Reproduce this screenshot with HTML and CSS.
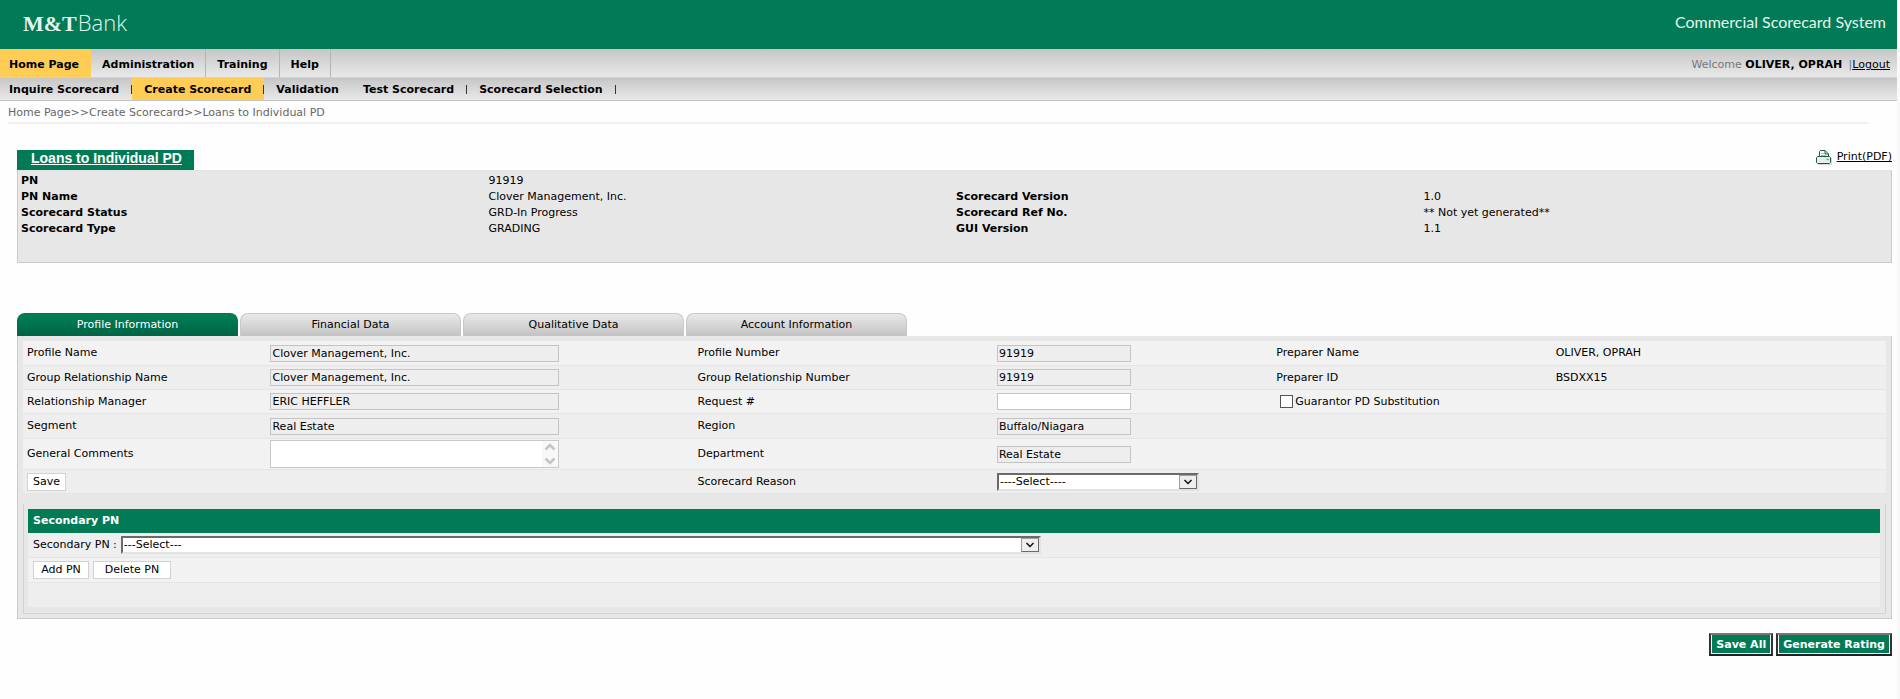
FILE: index.html
```html
<!DOCTYPE html>
<html lang="en">
<head>
<meta charset="utf-8">
<title>Commercial Scorecard System</title>
<link rel="stylesheet" href="styles.css">
</head>
<body>
<div class="page">
  <header class="banner">
    <div class="logo"><span class="logo-mark">M&amp;T</span><span class="logo-name">Bank</span></div>
    <div class="system-name">Commercial Scorecard System</div>
  </header>
  <nav class="main-nav">
    <a class="active" href="#">Home Page</a>
    <a href="#">Administration</a>
    <a href="#">Training</a>
    <a href="#">Help</a>
    <div class="user">Welcome <b>OLIVER, OPRAH</b> <span class="sep">|</span><a class="logout" href="#">Logout</a></div>
  </nav>
  <nav class="sub-nav">
    <a href="#">Inquire Scorecard</a>
    <a class="active" href="#">Create Scorecard</a>
    <a class="plain" href="#">Validation</a>
    <a href="#">Test Scorecard</a>
    <a href="#">Scorecard Selection</a>
  </nav>
  <div class="breadcrumb">Home Page&gt;&gt;Create Scorecard&gt;&gt;Loans to Individual PD</div>

  <main class="content">
    <div class="title-row">
      <h1 class="title"><a href="#">Loans to Individual PD</a></h1>
      <a class="print" href="#">
        <svg class="print-icon" width="16" height="16" viewBox="0 0 16 16" aria-hidden="true">
          <path d="M2 14.500h13.500V8" fill="none" stroke="#d5d5d5"/>
          <path d="M3.500 6.500V1.500l1-1H9L12.500 4v2.500" fill="#fff" stroke="#1a5c48"/>
          <path d="M9 .500V4h3.500" fill="none" stroke="#1a5c48"/>
          <path d="M5 3.500h3M5 5.500h5" stroke="#b5b5b5"/>
          <path d="M1.500 6.500h12l1 1v5l-1 1h-12l-1-1v-5z" fill="#e9eeec" stroke="#1a5c48"/>
          <path d="M10.500 9.500h2.500" stroke="#2ee62e" stroke-width="1.500"/>
        </svg><span>Print(PDF)</span></a>
    </div>
    <section class="summary">
      <b>PN</b><span>91919</span><b></b><span></span>
      <b>PN Name</b><span>Clover Management, Inc.</span><b>Scorecard Version</b><span>1.0</span>
      <b>Scorecard Status</b><span>GRD-In Progress</span><b>Scorecard Ref No.</b><span>** Not yet generated**</span>
      <b>Scorecard Type</b><span>GRADING</span><b>GUI Version</b><span>1.1</span>
    </section>

    <div class="tabs">
      <button class="tab selected" type="button">Profile Information</button>
      <button class="tab" type="button">Financial Data</button>
      <button class="tab" type="button">Qualitative Data</button>
      <button class="tab" type="button">Account Information</button>
    </div>
    <form class="panel">
      <div class="row">
        <label for="pname">Profile Name</label><input id="pname" class="field" readonly value="Clover Management, Inc.">
        <label for="pnum">Profile Number</label><input id="pnum" class="field short" readonly value="91919">
        <span>Preparer Name</span><span>OLIVER, OPRAH</span>
      </div>
      <div class="row">
        <label for="gname">Group Relationship Name</label><input id="gname" class="field" readonly value="Clover Management, Inc.">
        <label for="gnum">Group Relationship Number</label><input id="gnum" class="field short" readonly value="91919">
        <span>Preparer ID</span><span>BSDXX15</span>
      </div>
      <div class="row">
        <label for="mgr">Relationship Manager</label><input id="mgr" class="field" readonly value="ERIC HEFFLER">
        <label for="req">Request #</label><input id="req" class="field short">
        <label class="check"><input type="checkbox">Guarantor PD Substitution</label>
      </div>
      <div class="row">
        <label for="seg">Segment</label><input id="seg" class="field" readonly value="Real Estate">
        <label for="reg">Region</label><input id="reg" class="field short" readonly value="Buffalo/Niagara">
      </div>
      <div class="row tall">
        <label for="comments">General Comments</label>
        <div class="comments">
          <textarea id="comments"></textarea>
          <svg class="scroller" width="16" height="26" viewBox="0 0 16 26" aria-hidden="true"><path d="M3.500 8.500L8 4l4.500 4.500M3.500 17.500L8 22l4.500-4.500" fill="none" stroke="#c4c4c4" stroke-width="2.500"/></svg>
        </div>
        <label for="dept">Department</label><input id="dept" class="field short" readonly value="Real Estate">
      </div>
      <div class="row">
        <button class="btn" type="button">Save</button><span></span>
        <label for="reason">Scorecard Reason</label>
        <div class="drop reason"><select id="reason"><option>----Select----</option></select><span class="arrow"><svg width="10" height="8" viewBox="0 0 10 8" aria-hidden="true"><path d="M1.500 2L5 5.500 8.500 2" fill="none" stroke="#111" stroke-width="1.500"/></svg></span></div>
      </div>

      <section class="secondary">
        <h2>Secondary PN</h2>
        <div class="line">
          <label for="spn">Secondary PN :</label>
          <div class="drop spn"><select id="spn"><option>---Select---</option></select><span class="arrow"><svg width="10" height="8" viewBox="0 0 10 8" aria-hidden="true"><path d="M1.500 2L5 5.500 8.500 2" fill="none" stroke="#111" stroke-width="1.500"/></svg></span></div>
        </div>
        <div class="line"><button class="btn add" type="button">Add PN</button><button class="btn delete" type="button">Delete PN</button></div>
        <div class="line"></div>
      </section>
    </form>
    <div class="actions">
      <button class="action" type="button">Save All</button>
      <button class="action" type="button">Generate Rating</button>
    </div>
  </main>
</div>
</body>
</html>
```
FILE: styles.css
```css
* { box-sizing: border-box; }
html { background: #f9f9f9; }
body {
  margin: 0;
  font: 11px/16px "DejaVu Sans", Verdana, sans-serif;
  color: #000;
}
button, input, select, textarea { font: inherit; color: inherit; margin: 0; }
a { color: inherit; text-decoration: none; }

.page { margin-right: 3px; min-height: 100vh; background: #fefefe; }

.banner {
  display: flex;
  justify-content: space-between;
  height: 49px;
  padding: 0 11px 0 23px;
  background: #007b55;
  color: #e6f3ee;
}
.logo { display: flex; align-items: baseline; }
.logo-mark { font: bold 22px/44px "Liberation Serif", serif; }
.logo-name { font: 300 22px/44px "Open Sans", sans-serif; margin-left: 1px; }
.system-name { font: 16px/43px Lato, sans-serif; }

.main-nav, .sub-nav { display: flex; background: linear-gradient(#c6c6c6, #e9e9e9); font-weight: bold; }
.main-nav { height: 29px; border-bottom: 1px solid #efd28a; }
.main-nav > a { padding: 0 11px; line-height: 31px; border-right: 1px solid #b4b4b4; }
.main-nav > .active { padding: 0 12px 0 9px; border: 0; background: #ffcd55; }
.user { margin-left: auto; padding-right: 7px; line-height: 31px; font-weight: normal; color: #777; }
.user b { color: #000; }
.sep { margin-left: 3px; }
.logout { color: #000; text-decoration: underline; }
.sub-nav { height: 23px; border-bottom: 1px solid #c4c4c4; }
.sub-nav a { display: flex; align-items: center; padding-left: 12px; line-height: 23px; }
.sub-nav a:first-child { padding-left: 9px; }
.sub-nav a::after { content: ""; width: 1px; height: 9px; margin-left: 12px; background: #333; }
.sub-nav .plain::after { width: 0; }
.sub-nav .active { background: #ffcd55; }

.breadcrumb { margin: 0 29px 0 8px; height: 23px; line-height: 24px; border-bottom: 2px solid #f0f0f0; color: #666; }

.content { padding: 26px 5px 0 17px; }
.title-row { display: flex; justify-content: space-between; height: 20px; }
.title { margin: 0; padding: 0 12px 0 14px; background: #007b55; color: #fff; font: bold 14px/16px "Liberation Sans", Arial, sans-serif; text-decoration: underline; }
.print { display: flex; gap: 5px; line-height: 14px; }
.print span { text-decoration: underline; }

.summary {
  display: grid;
  grid-template-columns: repeat(4, 1fr);
  grid-auto-rows: 16px;
  height: 93px;
  padding: 2px 0 0 3px;
  background: #e7e7e7;
  border: 1px solid #cbcbcb;
  border-top-color: #e2e2e2;
}

.tabs { display: flex; gap: 2px; margin-top: 50px; }
.tab {
  width: 221px;
  height: 23px;
  border: 1px solid #c8c8c8;
  border-bottom: 0;
  border-radius: 8px 8px 0 0;
  background: linear-gradient(#e9e9e9, #c3c3c3);
}
.tab.selected { border-color: #00744f; background: linear-gradient(#007f58, #006444); color: #fff; }

.panel { background: #e7e7e7; border: 1px solid #cbcbcb; border-top: 0; padding: 5px 5px 4px; }
.row {
  display: grid;
  grid-template-columns: 244fr 428fr 300fr 280fr 280fr 331fr;
  align-items: center;
  height: 24px;
  padding-left: 4px;
  border-bottom: 1px solid #e5e5e5;
  background: #eeeeee;
}
.row:nth-child(3n+1) { height: 25px; }
.row:nth-child(odd) { background: #f2f2f2; }
.row.tall { height: 31px; }
.field { width: 289px; height: 17px; padding: 0 1px; border: 1px solid #c4c4c4; background: #eeeeee; border-radius: 0; }
.field.short { width: 134px; }
.field:not([readonly]) { background: #fff; }
.check { display: flex; align-items: center; gap: 2px; padding-left: 4px; grid-column: span 2; }
.check input { appearance: none; width: 13px; height: 13px; border: 1px solid #555; background: #fff; }
.comments { position: relative; width: 289px; height: 28px; }
.comments textarea { display: block; width: 100%; height: 100%; resize: none; overflow: hidden; border: 1px solid #c9c9c9; background: #fff; }
.scroller { position: absolute; top: 1px; right: 1px; background: #f8f8f8; }
.btn { justify-self: start; height: 18px; padding: 0 5px; border: 1px solid #d2d2d2; background: #fff; line-height: 14px; }

.drop { position: relative; height: 18px; border: 2px solid; border-color: #6a6a6a #e2e2e2 #e2e2e2 #6a6a6a; background: #fff; }
.drop select { display: block; appearance: none; width: 100%; height: 14px; padding: 0 1px; border: 0; background: #fff; line-height: 14px; }
.arrow { position: absolute; top: 0; right: 0; display: flex; align-items: center; justify-content: center; width: 18px; height: 14px; border: 1px solid; border-color: #a0a0a0 #6a6a6a #6a6a6a #a0a0a0; background: #eee; pointer-events: none; }
.reason { width: 202px; }
.spn { width: 920px; }

.secondary { margin-top: 10px; padding: 5px 5px 6px 4px; border: 1px solid #d3d3d3; border-top: 0; }
.secondary h2 { margin: 0; padding-left: 5px; background: #007b55; color: #fff; font: bold 11px/24px "DejaVu Sans", Verdana, sans-serif; }
.line { display: flex; align-items: center; gap: 4px; height: 25px; padding-left: 5px; border-bottom: 1px solid #e5e5e5; background: #eee; }
.line:nth-child(odd) { background: #f2f2f2; }
.line:last-child { height: 24px; border-bottom: 0; }
.add { width: 56px; }
.delete { width: 78px; }

.actions { display: flex; justify-content: flex-end; gap: 3px; margin-top: 14px; }
.action { height: 23px; padding: 0 5px; border: 2px solid; border-color: #777 #333 #222 #333; box-shadow: inset 1px -1px #fff, inset -1px 0 #fff; background: #007b55; color: #fff; font-weight: bold; }
```
